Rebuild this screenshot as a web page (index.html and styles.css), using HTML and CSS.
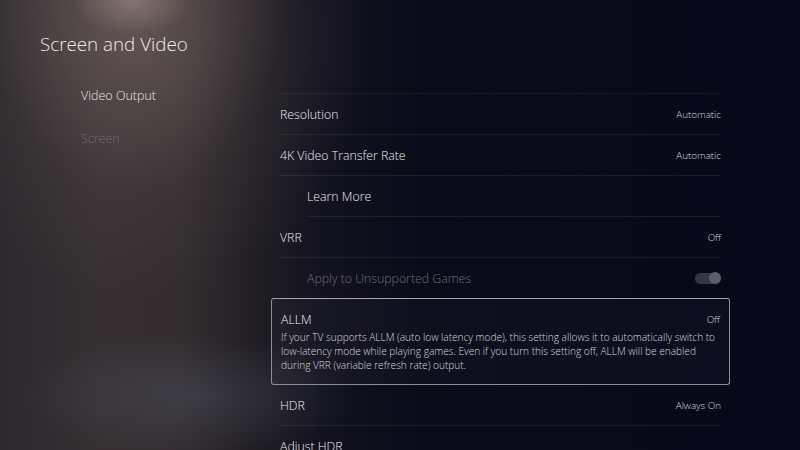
FILE: index.html
```html
<!DOCTYPE html>
<html>
<head>
<meta charset="utf-8">
<link rel="stylesheet" href="styles.css">
</head>
<body>
<div class="page">
  <aside class="side">
    <h1 class="title">Screen and Video</h1>
    <nav class="nav">
      <div class="nav-item active">Video Output</div>
      <div class="nav-item dim">Screen</div>
    </nav>
  </aside>
  <main class="list">
    <div class="row"><span class="label">Resolution</span><span class="value">Automatic</span></div>
    <div class="row"><span class="label">4K Video Transfer Rate</span><span class="value">Automatic</span></div>
    <div class="row sub"><span class="label">Learn More</span></div>
    <div class="row"><span class="label">VRR</span><span class="value">Off</span></div>
    <div class="row sub disabled"><span class="label">Apply to Unsupported Games</span><span class="toggle"><span class="knob"></span></span></div>
    <div class="row focused">
      <div class="focus-head"><span class="label">ALLM</span><span class="value">Off</span></div>
      <p class="desc">If your TV supports ALLM (auto low latency mode), this setting allows it to automatically switch to low-latency mode while playing games. Even if you turn this setting off, ALLM will be enabled during VRR (variable refresh rate) output.</p>
    </div>
    <div class="row"><span class="label">HDR</span><span class="value">Always On</span></div>
    <div class="row last"><span class="label">Adjust HDR</span></div>
  </main>
</div>
</body>
</html>
```
FILE: styles.css
```css
* { box-sizing: border-box; }
html, body { margin: 0; padding: 0; }
body {
  width: 800px;
  height: 450px;
  overflow: hidden;
  font-family: "Open Sans", "Noto Sans", sans-serif;
  color: #e6e6e8;
  background-color: #070916;
  background-image:
    radial-gradient(ellipse 60px 35px at 132px 0px, rgba(170,150,142,0.5), rgba(170,150,142,0) 100%),
    radial-gradient(ellipse 150px 190px at 135px 0px, rgba(135,118,112,0.4), rgba(135,118,112,0) 100%),
    radial-gradient(ellipse 230px 260px at 140px 40px, rgba(110,96,94,0.35), rgba(110,96,94,0) 100%),
    radial-gradient(ellipse 170px 60px at 190px 395px, rgba(80,85,100,0.4), rgba(80,85,100,0) 100%),
    linear-gradient(90deg, #2c282c 0px, #363033 100px, #332d30 180px, #221f24 250px, #13131f 320px, #0a0b19 420px, #06081a 800px);
}
.page {
  display: flex;
  height: 450px;
}
.side {
  width: 280px;
  flex: none;
  padding: 31px 0 0 40px;
}
.title {
  margin: 0;
  font-size: 18.8px;
  line-height: 26px;
  font-weight: 300;
  color: #ececec;
}
.nav {
  margin-top: 29px;
  padding-left: 41px;
}
.nav-item {
  font-size: 12.5px;
  line-height: 20px;
  height: 43px;
  font-weight: 300;
}
.nav-item.active { color: #e8e6e6; }
.nav-item.dim { color: #706b6c; }
.list {
  width: 441px;
  flex: none;
  margin-top: 93px;
  border-top: 1px solid rgba(255,255,255,0.06);
  display: flex;
  flex-direction: column;
}
.row {
  display: flex;
  align-items: center;
  justify-content: space-between;
  height: 41px;
  flex: none;
  border-bottom: 1px solid rgba(255,255,255,0.07);
}
.row.last { border-bottom: none; }
.row.sub {
  margin-left: 27px;
}
.label {
  font-size: 12.3px;
  font-weight: 300;
  color: #ececee;
}
.value {
  font-size: 9.8px;
  font-weight: 300;
  color: #d8d8dc;
}
.disabled .label { color: #6c6c74; }
.toggle {
  position: relative;
  width: 26px;
  height: 11px;
  border-radius: 6px;
  background: #363744;
}
.knob {
  position: absolute;
  right: 0;
  top: -0.5px;
  width: 12px;
  height: 12px;
  border-radius: 50%;
  background: #5c5d68;
}
.row.focused {
  display: block;
  height: 87px;
  margin: -1px -9px 0;
  padding: 11px 9px 0;
  border: 1px solid #8e8e96;
  border-top-color: #a4a4aa;
  border-radius: 3px;
  background: rgba(255,255,255,0.025);
}
.focus-head {
  display: flex;
  justify-content: space-between;
  align-items: center;
  height: 18px;
}
.desc {
  margin: 2px 0 0;
  font-size: 10.1px;
  line-height: 14px;
  font-weight: 300;
  color: #d8d8dc;
}
```
